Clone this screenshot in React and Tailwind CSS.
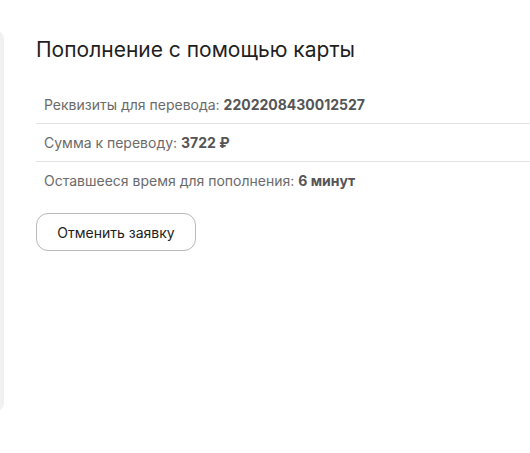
export default function App() {
  const rows = [
    { label: 'Реквизиты для перевода:', value: '2202208430012527' },
    { label: 'Сумма к переводу:', value: '3722 ₽' },
    { label: 'Оставшееся время для пополнения:', value: '6 минут' },
  ]

  return (
    <div className="flex w-[530px] h-[453px] bg-white overflow-hidden" style={{ fontFamily: 'Inter, "Noto Sans", sans-serif' }}>
      <div className="-ml-[12px] w-[16px] mt-[31px] h-[380px] rounded-xl bg-[#f1f1f1] flex-shrink-0" />
      <div className="flex-1 pl-[32px] pt-[36px]">
        <h1 className="text-[21px] leading-[28px] text-[#1f1f1f]">Пополнение с помощью карты</h1>
        <div className="mt-[22px]">
          {rows.map((r, i) => (
            <div key={i} className={`px-2 py-[9px] text-[14px] leading-[19px] text-[#6b6b6b] ${i < rows.length - 1 ? 'border-b border-[#e3e3e3]' : ''}`}>
              {r.label} <span className="font-bold text-[#555]">{r.value}</span>
            </div>
          ))}
        </div>
        <button className="mt-[14px] h-[38px] w-[160px] rounded-xl border border-[#b9b9b9] text-[14px] text-[#222] bg-white">
          Отменить заявку
        </button>
      </div>
    </div>
  )
}
